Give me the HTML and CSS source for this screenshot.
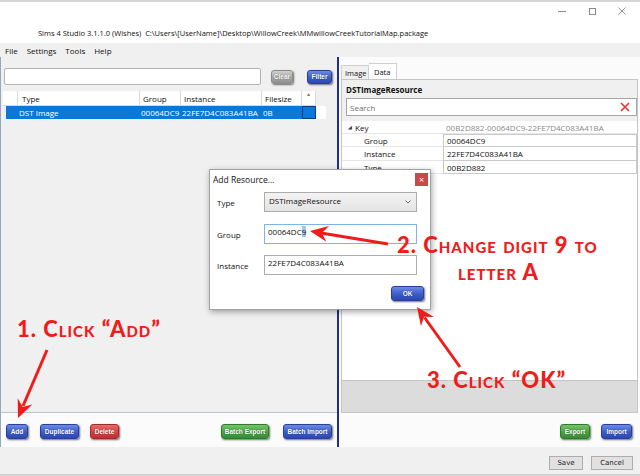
FILE: index.html
```html
<!DOCTYPE html>
<html>
<head>
<meta charset="utf-8">
<link rel="stylesheet" href="styles.css">
</head>
<body>
<div class="app">
  <div class="titlebar">
    <div class="title">Sims 4 Studio 3.1.1.0 (Wishes)&nbsp;&nbsp;C:\Users\[UserName]\Desktop\WillowCreek\MMwillowCreekTutorialMap.package</div>
    <div class="winctl">
      <div class="wc"><span class="wmin"></span></div>
      <div class="wc"><span class="wmax"></span></div>
      <div class="wc"><svg width="8" height="8" viewBox="0 0 8 8"><path d="M0.5 0.5L7.5 7.5M7.5 0.5L0.5 7.5" stroke="#8a8a8a" stroke-width="0.9"/></svg></div>
    </div>
  </div>
  <div class="menubar"><span>File</span><span>Settings</span><span>Tools</span><span>Help</span></div>
  <div class="main">
    <div class="left">
      <div class="leftbody">
        <div class="searchrow">
          <div class="search"></div>
          <div class="btn grey w-clear">Clear</div>
          <div class="btn blue w-filter">Filter</div>
        </div>
        <div class="grid">
          <div class="gr head">
            <div class="c c0"></div><div class="c c1">Type</div><div class="c c2">Group</div><div class="c c3">Instance</div><div class="c c4">Filesize</div><div class="c c5"><span class="sortar">&#9652;</span></div>
          </div>
          <div class="gr sel">
            <div class="c c0"></div><div class="c c1">DST Image</div><div class="c c2">00064DC9</div><div class="c c3">22FE7D4C083A41BA</div><div class="c c4">0B</div><div class="c c5 selend"></div><div class="c c6"></div>
          </div>
        </div>
      </div>
      <div class="btnbar">
        <div class="btn blue w-add">Add</div>
        <div class="btn blue w-dup">Duplicate</div>
        <div class="btn red w-del">Delete</div>
        <div class="spacer"></div>
        <div class="btn green w-bexp">Batch Export</div>
        <div class="btn blue w-bimp">Batch Import</div>
      </div>
    </div>
    <div class="right">
      <div class="tabs">
        <div class="tab">Image</div>
        <div class="tab active">Data</div>
      </div>
      <div class="tabbody">
        <div class="reshead">
          <div class="restitle">DSTImageResource</div>
          <div class="rsearch">
            <span>Search</span>
            <svg width="10" height="10" viewBox="0 0 10 10"><path d="M1 1L9 9M9 1L1 9" stroke="#e0352b" stroke-width="1.6"/></svg>
          </div>
        </div>
        <div class="props">
          <div class="prow key"><div class="plabel"><span class="tri">&#9698;</span>Key</div><div class="pval plain">00B2D882-00064DC9-22FE7D4C083A41BA</div></div>
          <div class="prow"><div class="plabel sub">Group</div><div class="pval">00064DC9</div></div>
          <div class="prow tall"><div class="plabel sub">Instance</div><div class="pval">22FE7D4C083A41BA</div></div>
          <div class="prow"><div class="plabel sub">Type</div><div class="pval">00B2D882</div></div>
        </div>
        <div class="fill"></div>
        <div class="greybox"></div>
      </div>
      <div class="btnbar rbar">
        <div class="btn green w-exp">Export</div>
        <div class="btn blue w-imp">Import</div>
      </div>
    </div>
  </div>
  <div class="footer">
    <div class="wbtn w-save">Save</div>
    <div class="wbtn w-cancel">Cancel</div>
  </div>
</div>

<div class="dialog">
  <div class="dtitle">
    <span>Add Resource...</span>
    <div class="dclose">&#215;</div>
  </div>
  <div class="dform">
    <div class="dlabel">Type</div>
    <div class="combo"><span>DSTImageResource</span><svg width="6" height="4" viewBox="0 0 6 4"><path d="M0.5 0.5L3 3L5.5 0.5" fill="none" stroke="#555" stroke-width="0.8"/></svg></div>
    <div class="dlabel">Group</div>
    <div class="dinput focus">00064DC<span class="hl">9</span></div>
    <div class="dlabel">Instance</div>
    <div class="dinput">22FE7D4C083A41BA</div>
  </div>
  <div class="dfoot"><div class="btn blue w-ok">OK</div></div>
</div>

<div class="note n1">1. Click “Add”</div>
<div class="note n2">2. Change digit 9 to</div>
<div class="note n2b">letter A</div>
<div class="note n3">3. Click “OK”</div>

<svg class="arrows" width="640" height="476" viewBox="0 0 640 476">
  <g fill="#f01c1c" stroke="none">
    <line x1="47" y1="350" x2="23" y2="406" stroke="#f01c1c" stroke-width="3"/>
    <polygon points="18,418 32.4,404.6 22.7,407 17.7,398.3"/>
    <line x1="388" y1="244" x2="321" y2="233" stroke="#f01c1c" stroke-width="3"/>
    <polygon points="310,231 329.1,226.1 321.8,233 326.4,241.8"/>
    <line x1="460" y1="367" x2="424.5" y2="317.5" stroke="#f01c1c" stroke-width="3"/>
    <polygon points="417,307 434,317 424,316.75 421,326.3"/>
  </g>
</svg>
</body>
</html>
```
FILE: styles.css
```css
* { box-sizing: border-box; margin: 0; padding: 0; }
html, body { width: 640px; height: 476px; overflow: hidden; }
body {
  font-family: "Open Sans", "Noto Sans", sans-serif;
  font-size: 8px;
  color: #111;
  background: #f0f0f0;
  position: relative;
}
.app { display: flex; flex-direction: column; height: 476px; }

/* title bar */
.titlebar {
  height: 43px;
  background: #fff;
  border-top: 2px solid #d6d6d6;
  display: flex;
  align-items: flex-start;
}
.title { margin: 25px 0 0 38px; font-size: 7.5px; line-height: 12px; white-space: nowrap; color: #111; }
.winctl { margin-left: auto; margin-right: 3px; display: flex; }
.wc { width: 30px; height: 18px; display: flex; align-items: center; justify-content: center; }
.wmin { width: 8px; height: 1px; background: #8a8a8a; }
.wmax { width: 7px; height: 7px; border: 1px solid #8a8a8a; }

/* menu */
.menubar {
  height: 14px;
  background: #f0f0f0;
  display: flex;
  gap: 9px;
  padding-left: 5px;
  align-items: center;
  font-size: 8px;
}

/* main */
.main { height: 390px; display: flex; }
.left {
  width: 339px;
  display: flex;
  flex-direction: column;
  border-left: 1px solid #98a6c2;
  border-right: 2px solid #1d2f90;
}
.leftbody { flex: 1; background: #f0f0f0; border-bottom: 1px solid #b9c3d3; }
.searchrow { height: 33px; display: flex; align-items: center; padding: 11px 0 5px 3px; }
.search { width: 257px; height: 17px; background: #fff; border: 1px solid #b3b3b3; border-radius: 2px; }

.btn {
  height: 15px;
  border-radius: 3px;
  color: #fff;
  font-family: "Liberation Sans", "Open Sans", sans-serif;
  font-weight: bold;
  font-size: 6.5px;
  display: flex;
  align-items: center;
  justify-content: center;
  text-shadow: 0 0 1px rgba(0,0,0,.6);
  box-shadow: 1px 1px 2px rgba(0,0,0,.55);
  white-space: nowrap;
}
.blue { background: linear-gradient(#6b8ae6, #3c5cc9 55%, #2c48ad); border: 1px solid #2a3f98; }
.grey { background: linear-gradient(#d0d0d0, #a8a8a8 55%, #8f8f8f); border: 1px solid #8a8a8a; }
.red { background: linear-gradient(#ea6a6a, #d04343 55%, #bb3232); border: 1px solid #a02a2a; }
.green { background: linear-gradient(#74c46a, #4aa244 55%, #3b8a36); border: 1px solid #2f7a2b; }

.w-clear { width: 22px; height: 14px; margin-left: 10px; }
.w-filter { width: 25px; height: 14px; margin-left: 14px; }

/* grid */
.grid { margin-left: 2px; width: 323px; }
.gr { display: flex; height: 15px; }
.gr.head { background: #fff; width: 313px; border-bottom: 1px solid #d8d8d8; margin-top: 1px; }
.gr.sel { height: 13px; }
.c { height: 100%; display: flex; align-items: center; padding-left: 3px; white-space: nowrap; border-right: 1px solid #dadada; overflow: hidden; }
.c0 { width: 15px; }
.c1 { width: 122px; padding-left: 4px; }
.c2 { width: 41px; }
.c3 { width: 81px; }
.c4 { width: 40px; }
.c5 { width: 14px; justify-content: center; align-items: flex-start; padding: 0; }
.c6 { width: 10px; background: #fff; border-right: none; }
.sortar { font-size: 6px; color: #777; line-height: 6px; }
.sel .c { background: #0a78d6; color: #fff; border-right: 1px solid #0a78d6; padding-left: 1px; }
.sel .c0 { background: #0a78d6; margin-left: 3px; width: 12px; }
.sel .selend { background: #0a78d6; border: 1px solid #0d3d80; }
.sel .c6 { background: #fff; border: none; }

/* bottom button bars */
.btnbar {
  height: 34px;
  background: #fbfbfb;
  display: flex;
  align-items: flex-start;
  padding: 11px 5px 0 5px;
}
.spacer { flex: 1; }
.w-add { width: 22px; }
.w-dup { width: 39px; margin-left: 12px; }
.w-del { width: 29px; margin-left: 11px; }
.w-bexp { width: 48px; }
.w-bimp { width: 49px; margin-left: 14px; }
.rbar { justify-content: flex-end; padding-right: 6px; }
.w-exp { width: 30px; }
.w-imp { width: 31px; margin-left: 11px; }

/* right panel */
.right { flex: 1; display: flex; flex-direction: column; background: #fbfbfb; padding: 0 2px 0 2px; }
.tabs { height: 22px; display: flex; align-items: flex-end; }
.tab {
  height: 14px;
  width: 28px;
  border: 1px solid #cfcfcf;
  border-bottom: none;
  background: #f0f0f0;
  display: flex;
  align-items: center;
  padding-left: 3px;
  font-size: 7.5px;
}
.tab.active { height: 16px; background: #fff; padding-left: 5px; border-left: none; }
.tabbody {
  flex: 1;
  border: 1px solid #c6c6c6;
  background: #fff;
  display: flex;
  flex-direction: column;
}
.reshead { background: #f0f0f0; padding: 0 0 5px 4px; }
.restitle { height: 18px; display: flex; align-items: center; font-weight: bold; font-size: 8px; }
.rsearch {
  height: 18px;
  background: #fff;
  border: 1px solid #a6a6a6;
  display: flex;
  align-items: center;
  justify-content: space-between;
  padding: 0 6px 0 3px;
  color: #6f6f6f;
}
.props { display: flex; flex-direction: column; }
.prow { height: 13px; display: flex; }
.prow.tall { height: 14px; }
.plabel {
  width: 101px;
  display: flex;
  align-items: center;
  padding-left: 6px;
  border-bottom: 1px solid #e6e6e6;
}
.plabel.sub { padding-left: 22px; }
.tri { font-size: 5px; margin-right: 3px; color: #333; }
.pval {
  flex: 1;
  border: 1px solid #cacaca;
  border-top: none;
  display: flex;
  align-items: center;
  padding-left: 3px;
  white-space: nowrap;
}
.prow.key .pval { border: none; border-bottom: 1px solid #e6e6e6; color: #8a8a8a; padding-left: 3px; }
.prow.key + .prow .pval { border-top: 1px solid #cacaca; }
.fill { flex: 1; }
.greybox { height: 32px; background: #dcdcdc; border-top: 1px solid #c4c4c4; }

/* footer */
.footer {
  height: 29px;
  background: #f0f0f0;
  border-bottom: 2px solid #d2d2d2;
  display: flex;
  justify-content: flex-end;
  align-items: flex-start;
  padding: 9px 7px 0 0;
  gap: 8px;
}
.wbtn {
  height: 14px;
  background: #e1e1e1;
  border: 1px solid #adadad;
  display: flex;
  align-items: center;
  justify-content: center;
  font-family: "DejaVu Sans", sans-serif;
  font-size: 7px;
  color: #222;
}
.w-save { width: 34px; }
.w-cancel { width: 42px; }

/* dialog */
.dialog {
  position: absolute;
  left: 209px;
  top: 169px;
  width: 222px;
  height: 141px;
  background: #fff;
  border: 1px solid #a2a2a2;
  box-shadow: 1px 2px 6px rgba(0,0,0,.35);
  display: flex;
  flex-direction: column;
}
.dtitle { height: 18px; display: flex; align-items: center; padding-left: 3px; font-size: 8.5px; }
.dclose {
  margin-left: auto;
  margin-right: 2px;
  width: 13px;
  height: 13px;
  background: #c94848;
  color: #fff;
  font-size: 9px;
  line-height: 13px;
  text-align: center;
}
.dform {
  display: grid;
  grid-template-columns: 47px 153px;
  row-gap: 11px;
  padding: 4px 0 0 7px;
  align-items: center;
}
.dlabel { font-size: 8px; }
.combo {
  height: 20px;
  background: linear-gradient(#f3f3f3, #e4e4e4);
  border: 1px solid #acacac;
  display: flex;
  align-items: center;
  justify-content: space-between;
  padding: 0 5px 0 4px;
  margin-bottom: 1px;
}
.combo span { margin-top: -3px; }
.dinput {
  height: 20px;
  border: 1px solid #abadb3;
  padding: 2px 0 0 3px;
  line-height: 10px;
}
.dinput.focus { border-color: #7eb4ea; }
.hl { background: #9dc9f2; }
.dfoot { margin-top: auto; display: flex; justify-content: flex-end; padding: 0 6px 8px 0; }
.w-ok { width: 33px; }

/* annotations */
.note {
  position: absolute;
  font-family: "Lato", "DejaVu Sans", sans-serif;
  font-weight: 900;
  font-variant: small-caps;
  font-size: 22px;
  line-height: 22px;
  letter-spacing: 1px;
  color: #f01c1c;
  white-space: nowrap;
}
.n1 { left: 17px; top: 318px; }
.n2 { left: 397px; top: 234px; }
.n2b { left: 458px; top: 261px; }
.n3 { left: 427px; top: 369px; }
.arrows { position: absolute; left: 0; top: 0; pointer-events: none; }
```
